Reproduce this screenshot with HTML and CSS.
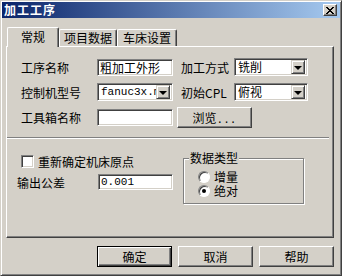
FILE: index.html
```html
<!DOCTYPE html>
<html lang="zh">
<head>
    <meta charset="UTF-8">
    <title>加工工序</title>
    <link rel="stylesheet" href="styles.css">
</head>
<body>
    <div class="dialog">
        <div class="titlebar">
            <span class="title">加工工序</span>
            <span class="close">
                <svg width="8" height="7" viewBox="0 0 8 7">
                    <path d="M0 0h2v1h1v1h2v-1h1v-1h2v1h-1v1h-1v1h-1v1h1v1h1v1h1v1h-2v-1h-1v-1h-2v1h-1v1h-2v-1h1v-1h1v-1h1v-1h-1v-1h-1v-1h-1z" fill="#000"/>
                </svg>
            </span>
        </div>

        <div class="tabs">
            <div class="tab tab-1 active">常规</div>
            <div class="tab tab-2">项目数据</div>
            <div class="tab tab-3">车床设置</div>
        </div>

        <div class="panel">
            <div class="fields">
                <div class="row">
                    <span class="label">工序名称</span>
                    <div class="edit">粗加工外形</div>
                    <span class="label label-2">加工方式</span>
                    <div class="combo"><span class="combo-text">铣削</span><span class="drop"><i class="arrow"></i></span></div>
                </div>
                <div class="row row-2">
                    <span class="label">控制机型号</span>
                    <div class="combo combo-short"><span class="combo-text mono clipped">fanuc3x.mac</span><span class="drop"><i class="arrow"></i></span></div>
                    <span class="label label-2">初始CPL</span>
                    <div class="combo"><span class="combo-text">俯视</span><span class="drop"><i class="arrow"></i></span></div>
                </div>
                <div class="row row-3">
                    <span class="label">工具箱名称</span>
                    <div class="edit"></div>
                    <button class="btn btn-browse">浏览<span class="mono">...</span></button>
                </div>
            </div>

            <div class="sep"></div>

            <div class="options">
                <div class="options-left">
                    <div class="check-row">
                        <span class="checkbox"></span>
                        <span>重新确定机床原点</span>
                    </div>
                    <div class="row tol-row">
                        <span class="label tol-label">输出公差</span>
                        <div class="edit tol-edit mono">0.001</div>
                    </div>
                </div>
                <div class="group">
                    <span class="group-title">数据类型</span>
                    <div class="radio-row"><span class="radio"></span>增量</div>
                    <div class="radio-row"><span class="radio checked"></span>绝对</div>
                </div>
            </div>
        </div>

        <div class="buttons">
            <button class="btn default">确定</button>
            <button class="btn">取消</button>
            <button class="btn">帮助</button>
        </div>
    </div>
</body>
</html>
```

FILE: styles.css
```css
body {
    margin: 0;
    font-family: "Noto Sans CJK SC", "Liberation Sans", sans-serif;
    font-size: 12px;
    color: #000;
    background: #d4d0c8;
}
.mono {
    font-family: "Liberation Mono", "Noto Sans CJK SC", monospace;
    font-size: 11px;
}
.dialog {
    width: 342px;
    height: 276px;
    box-sizing: border-box;
    padding: 1px;
    background: #d4d0c8;
    border: 1px solid;
    border-color: #d4d0c8 #404040 #404040 #d4d0c8;
    box-shadow: inset 1px 1px 0 #fff, inset -1px -1px 0 #808080;
}
.titlebar {
    height: 16px;
    display: flex;
    align-items: center;
    justify-content: space-between;
    padding: 0 3px 0 2px;
    background: linear-gradient(to right, #0a246a, #a6caf0);
}
.title {
    color: #fff;
    font-weight: bold;
    letter-spacing: 1px;
    line-height: 16px;
}
.close {
    width: 14px;
    height: 12px;
    box-sizing: border-box;
    display: flex;
    align-items: center;
    justify-content: center;
    background: #d4d0c8;
    border: 1px solid;
    border-color: #fff #404040 #404040 #fff;
    box-shadow: inset -1px -1px 0 #808080;
}

/* tabs */
.tabs {
    display: flex;
    align-items: flex-end;
    height: 19px;
    margin: 9px 0 0 5px;
}
.tab {
    height: 17px;
    box-sizing: border-box;
    display: flex;
    align-items: center;
    justify-content: center;
    border: 1px solid;
    border-color: #fff #404040 transparent #fff;
    border-bottom: none;
    border-radius: 2px 2px 0 0;
    box-shadow: inset -1px 0 0 #808080;
    background: #d4d0c8;
    line-height: 14px;
}
.tab-1 { width: 52px; }
.tab-2 { width: 58px; }
.tab-3 { width: 60px; }
.tab.active {
    height: 20px;
    margin-bottom: -1px;
    position: relative;
    z-index: 1;
    padding-bottom: 2px;
}

/* panel */
.panel {
    width: 328px;
    height: 192px;
    margin-left: 4px;
    box-sizing: border-box;
    border: 1px solid;
    border-color: #fff #404040 #404040 #fff;
    box-shadow: inset -1px -1px 0 #808080;
}
.fields {
    padding: 11px 0 0 14px;
}
.row {
    display: flex;
    align-items: center;
    height: 18px;
}
.row-2 { margin-top: 7px; }
.row-3 {
    margin-top: 6px;
    height: 21px;
}
.label {
    width: 76px;
    flex-shrink: 0;
    white-space: nowrap;
}
.label-2 {
    width: 53px;
    margin-left: 8px;
}
.edit, .combo {
    width: 76px;
    height: 17px;
    box-sizing: border-box;
    background: #fff;
    border: 1px solid;
    border-color: #808080 #fff #fff #808080;
    box-shadow: inset 1px 1px 0 #404040, inset -1px -1px 0 #d4d0c8;
    padding: 0 2px;
    line-height: 15px;
    white-space: nowrap;
}
.combo {
    width: 74px;
    height: 18px;
    display: flex;
    align-items: center;
    padding: 2px;
    line-height: 14px;
}
.combo-short { width: 76px; }
.combo-text {
    flex: 1;
    min-width: 0;
    padding-left: 1px;
}
.clipped {
    overflow-x: clip;
    overflow-y: visible;
}
.drop {
    width: 14px;
    height: 14px;
    box-sizing: border-box;
    flex-shrink: 0;
    display: flex;
    align-items: center;
    justify-content: center;
    background: #d4d0c8;
    border: 1px solid;
    border-color: #d4d0c8 #404040 #404040 #d4d0c8;
    box-shadow: inset 1px 1px 0 #fff, inset -1px -1px 0 #808080;
}
.arrow {
    width: 0;
    height: 0;
    margin-top: 1px;
    border-left: 4px solid transparent;
    border-right: 4px solid transparent;
    border-top: 4px solid #000;
}

/* buttons */
.btn {
    width: 75px;
    height: 21px;
    padding: 0;
    box-sizing: border-box;
    font: inherit;
    color: #000;
    background: #d4d0c8;
    border: 1px solid;
    border-color: #fff #404040 #404040 #fff;
    box-shadow: inset -1px -1px 0 #808080;
}
.btn-browse {
    margin-left: 4px;
}
.btn.default {
    border: 1px solid #000;
    box-shadow: inset 1px 1px 0 #fff, inset -1px -1px 0 #404040, inset -2px -2px 0 #808080;
}
.buttons {
    display: flex;
    justify-content: flex-end;
    gap: 6px;
    margin-top: 8px;
    padding-right: 6px;
}

.sep {
    height: 2px;
    box-sizing: border-box;
    margin: 9px 4px 0 0;
    border-top: 1px solid #808080;
    border-bottom: 1px solid #fff;
}

/* lower part */
.options {
    display: flex;
}
.options-left {
    width: 176px;
    padding-top: 16px;
}
.check-row {
    display: flex;
    align-items: center;
    height: 13px;
    padding-left: 14px;
    gap: 4px;
    line-height: 13px;
}
.checkbox {
    width: 13px;
    height: 13px;
    box-sizing: border-box;
    background: #fff;
    border: 1px solid;
    border-color: #808080 #fff #fff #808080;
    box-shadow: inset 1px 1px 0 #404040, inset -1px -1px 0 #d4d0c8;
}
.tol-row {
    margin-top: 6px;
    height: 16px;
}
.tol-label {
    width: 81px;
    padding-left: 10px;
}
.tol-edit {
    width: 75px;
    height: 16px;
    line-height: 14px;
}
.group {
    position: relative;
    width: 121px;
    height: 46px;
    margin-top: 19px;
    box-sizing: border-box;
    padding: 11px 0 0 14px;
    border: 1px solid #808080;
    box-shadow: 1px 1px 0 #fff, inset 1px 1px 0 #fff;
}
.group-title {
    position: absolute;
    top: -8px;
    left: 5px;
    padding: 0 1px;
    background: #d4d0c8;
    line-height: 14px;
}
.radio-row {
    display: flex;
    align-items: center;
    gap: 4px;
    height: 13px;
    line-height: 13px;
    margin-bottom: 1px;
}
.radio {
    width: 12px;
    height: 12px;
    box-sizing: border-box;
    border-radius: 50%;
    background: #fff;
    border: 1px solid;
    border-color: #808080 #fff #fff #808080;
    box-shadow: inset 1px 1px 0 #404040;
    display: flex;
    align-items: center;
    justify-content: center;
}
.radio.checked::after {
    content: "";
    width: 4px;
    height: 4px;
    border-radius: 50%;
    background: #000;
}
```
